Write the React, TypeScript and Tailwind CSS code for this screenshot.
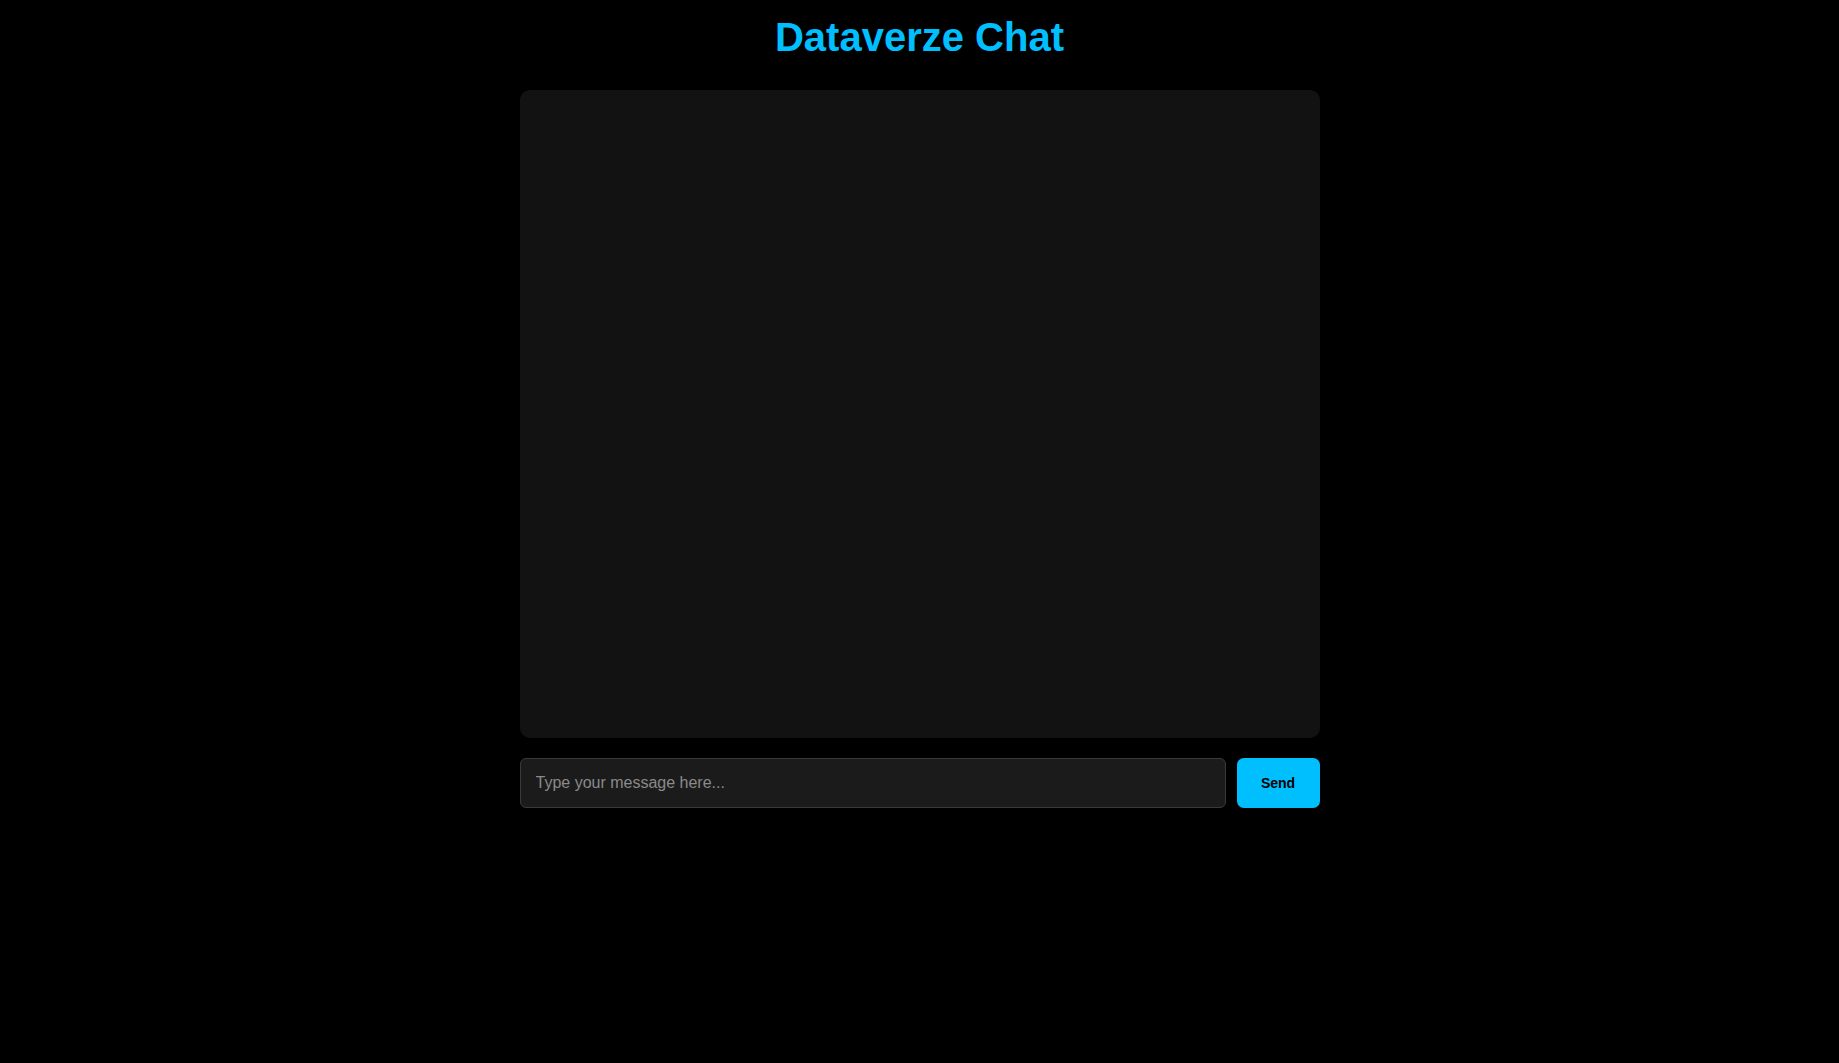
import React from "react";

export default function App() {
  return (
    <div className="h-screen w-full overflow-hidden bg-black flex flex-col items-center" style={{ fontFamily: '"Liberation Sans", Arial, sans-serif' }}>
      <h1 className="mt-[14px] text-[40px] leading-[46px] font-bold text-[#00bfff]">Dataverze Chat</h1>
      <div className="mt-[30px] w-[800px] h-[648px] shrink-0 rounded-[10px] bg-[#121212]"></div>
      <div className="mt-[20px] w-[800px] flex gap-[11px]">
        <input
          type="text"
          placeholder="Type your message here..."
          className="flex-1 h-[50px] rounded-[6px] border border-[#3a3a3a] bg-[#1b1b1b] px-[15px] text-[16px] text-white placeholder:text-[#8a8a8a] outline-none"
        />
        <button className="w-[83px] h-[50px] rounded-[7px] bg-[#00bfff] text-[14px] font-bold text-black">Send</button>
      </div>
    </div>
  );
}
